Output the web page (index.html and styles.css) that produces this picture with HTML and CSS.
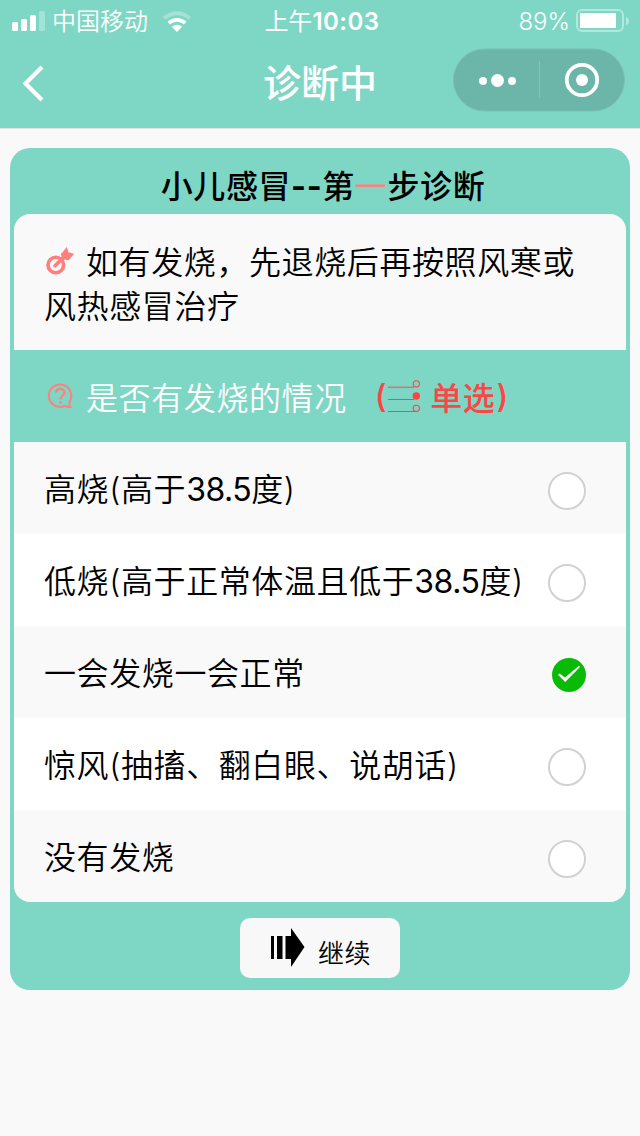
FILE: index.html
```html
<!DOCTYPE html>
<html lang="zh-CN">
<head>
<meta charset="utf-8">
<title>诊断中</title>
<link rel="stylesheet" href="styles.css">
</head>
<body>
<header class="header">
  <div class="status">
    <div class="status-left">
      <svg class="signal" width="33" height="20" viewBox="0 0 33 20" fill="#fff"><rect x="0" y="11" width="6" height="9" rx="1.5"/><rect x="9" y="8" width="6" height="12" rx="1.5"/><rect x="18" y="4" width="6" height="16" rx="1.5"/><rect x="27" y="0" width="6" height="20" rx="1.5" opacity=".3"/></svg>
      <span class="carrier">中国移动</span>
      <svg class="wifi" width="28" height="21" viewBox="0 0 28 21" fill="none" stroke="#fff"><path d="M1.2 7.3C8.5.4 19.5.4 26.8 7.3" stroke-width="4" opacity=".3"/><path d="M5.8 12.2c4.8-4.4 11.6-4.4 16.4 0" stroke-width="3.6"/><path d="M8.8 15.8c3-2.7 7.4-2.7 10.4 0L14 21z" fill="#fff" stroke="none"/></svg>
    </div>
    <div class="clock">上午<b>10:03</b></div>
    <div class="status-right">
      <span class="percent">89%</span>
      <svg class="battery" width="54" height="24" viewBox="0 0 54 24"><rect x="1" y="1" width="46" height="21" rx="5" fill="none" stroke="#fff" stroke-width="2" opacity=".42"/><rect x="4" y="4" width="36" height="15" fill="#fff"/><path d="M50 8q3 1 3 4t-3 4z" fill="#fff" opacity=".42"/></svg>
    </div>
  </div>
  <nav class="nav">
    <svg class="back" width="24" height="38" viewBox="0 0 24 38" fill="none" stroke="#fff" stroke-width="4.2"><path d="M22 3 5.500 19.500 22 36"/></svg>
    <h1 class="page-title">诊断中</h1>
    <svg class="capsule" width="174" height="64" viewBox="0 0 174 64"><rect x="1.500" y="1" width="171" height="62" rx="31" fill="#6bb6a8" stroke="#79c1b3"/><g fill="#fff"><circle cx="31" cy="33" r="4"/><circle cx="45.500" cy="32.500" r="6.500"/><circle cx="60" cy="33" r="4"/><circle cx="130" cy="32" r="6"/></g><path d="M87.500 13v37" stroke="#86c5b9"/><circle cx="130" cy="32" r="15.200" fill="none" stroke="#fff" stroke-width="3.800"/></svg>
  </nav>
</header>
<main class="card">
  <h2 class="card-title">小儿感冒<span class="dash">--</span>第<em>一</em>步诊断</h2>
  <section class="panel">
    <p class="tip"><svg class="icon target" width="32" height="32" viewBox="0 0 32 32"><circle cx="11.800" cy="20" r="7.800" fill="none" stroke="#ff7f7f" stroke-width="3.600"/><path d="M11 20.800 20 12" stroke="#ff7f7f" stroke-width="3.600" stroke-linecap="round"/><path d="m16.800 9.300 6-7.300 1.700 5.300 5.600 1.500-5.400 6.400-6.200-1z" fill="#ff7f7f"/></svg><span class="tip-text">如有发烧，先退烧后再按照风寒或<br></span>风热感冒治疗</p>
    <div class="question">
      <svg class="icon" width="32" height="32" viewBox="0 0 32 32" fill="none" stroke="#ff7f7f" stroke-width="2"><path d="M25.600 21.500A11.200 11.200 0 1 0 20.800 25.800q2 1.200 5.400 1.200-1.200-2-.6-5.500"/><path d="M12.200 12.800c0-5.200 8.200-5.200 8.200-.3 0 3.300-4 3.200-4 7" stroke-width="2.200"/><circle cx="16.400" cy="22.600" r="1.300" fill="#ff7f7f" stroke="none"/></svg>
      <span class="question-text">是否有发烧的情况</span>
      <span class="mode"><span class="paren">(</span><svg class="list-icon" width="34" height="34" viewBox="0 0 34 34" fill="none" stroke="#ff4444"><path d="M1 8.300h26" stroke-width="1.500" opacity=".65"/><path d="M1 20.500h26M1 32.500h29" stroke-width="1"/><circle cx="29.300" cy="4.800" r="3.100" stroke-width="1.100"/><circle cx="29.300" cy="17" r="3.700" fill="#ff4444" stroke="none"/><circle cx="29.300" cy="29.300" r="3.100" stroke-width="1.100"/></svg><span class="mode-text">单选</span><span class="paren">)</span></span>
    </div>
    <div class="option"><span>高烧(高于<span class="num">38.5</span>度)</span><i class="radio"></i></div>
    <div class="option"><span>低烧(高于正常体温且低于<span class="num">38.5</span>度)</span><i class="radio"></i></div>
    <div class="option"><span>一会发烧一会正常</span><svg class="checked" width="34" height="34" viewBox="0 0 34 34"><circle cx="17" cy="17" r="17" fill="#09bb07"/><path d="m6 16.800 1.500-1.400 5.500 4.200L27 7.800l1 1.200L13.200 24z" fill="#fff"/></svg></div>
    <div class="option"><span>惊风(抽搐、翻白眼、说胡话)</span><i class="radio"></i></div>
    <div class="option"><span>没有发烧</span><i class="radio"></i></div>
  </section>
  <button class="next"><svg width="34" height="40" viewBox="0 0 34 40"><path d="M0 9h3v23H0zm6 0h5.500v23H6zm8.500 0H20V1l13.500 19L20 40v-8h-5.500z"/></svg><span>继续</span></button>
</main>
</body>
</html>
```
FILE: styles.css
```css
* { box-sizing: border-box; margin: 0; padding: 0; }
body {
  width: 640px;
  height: 1136px;
  overflow: hidden;
  background: #f9f9f9;
  color: #000;
  font-family: Inter, "Noto Sans CJK SC", sans-serif;
  font-size: 32px;
  font-weight: 350;
  letter-spacing: .6px;
}
svg { display: block; flex: none; }
.header { height: 129px; background: #7ed6c5; border-bottom: 1px solid #e2e2e2; color: #fff; }
.status {
  display: grid;
  grid-template-columns: 1fr auto 1fr;
  height: 40px;
  padding: 0 10px 0 12px;
  align-items: center;
  font-size: 24px;
  line-height: 40px;
  letter-spacing: 0;
}
.status-left, .status-right { display: flex; align-items: center; }
.status-right { justify-content: flex-end; }
.carrier { margin: 2px 0 0 7px; }
.wifi { margin-left: 15px; }
.clock { padding: 2px 0 0 2px; font-weight: 400; }
.clock b { font-weight: 600; letter-spacing: .5px; }
.percent { margin: 2px 6px 0 0; font-weight: 300; }
.nav { position: relative; display: flex; justify-content: center; height: 88px; }
.back { position: absolute; left: 20px; top: 24px; }
.page-title { padding-top: 1px; font-size: 38px; line-height: 84px; font-weight: 500; letter-spacing: 0; }
.capsule { position: absolute; left: 452px; top: 8px; }
.card { width: 620px; height: 842px; margin: 19px 10px 0; padding: 0 4px; border-radius: 20px; background: #7ed6c5; }
.card-title { height: 66px; padding-left: 6px; font-size: 32px; line-height: 77px; text-align: center; font-weight: 500; }
.card-title em { color: #ff7f7f; font-style: normal; font-weight: 400; }
.dash { font-weight: 700; }
.panel { overflow: hidden; border-radius: 16px; background: #f9f9f9; }
.tip { height: 136px; padding: 27px 30px 0; line-height: 44px; }
.tip .icon { display: inline-block; margin-right: 10px; vertical-align: -3px; }
.question { display: flex; align-items: center; height: 92px; padding: 0 30px; background: #7ed6c5; color: #fff; }
.question-text { margin-left: 10px; }
.mode { display: flex; align-items: center; margin-left: 28px; color: #ff4444; font-weight: 500; }
.mode-text { margin: 0 1px 0 9px; }
.option { display: flex; align-items: center; justify-content: space-between; height: 92px; padding: 0 40px 0 30px; line-height: 92px; }
.option > span { padding-top: 4px; }
.num { font-weight: 400; letter-spacing: -.5px; }
.option:nth-of-type(odd) { background: #fff; }
.radio { width: 38px; height: 38px; margin-top: 6px; border: 2px solid #d1d1d1; border-radius: 50%; background: #fff; }
.checked { margin-top: 6px; }
.next {
  display: flex;
  align-items: center;
  width: 160px;
  height: 60px;
  margin: 16px auto 0;
  padding: 0 0 2px 31px;
  border: 0;
  border-radius: 10px;
  background: #f8f8f8;
  color: #000;
  font: 350 26px/60px Inter, "Noto Sans CJK SC", sans-serif;
  letter-spacing: .5px;
}
.next span { margin: 13px 0 0 13px; }
```
